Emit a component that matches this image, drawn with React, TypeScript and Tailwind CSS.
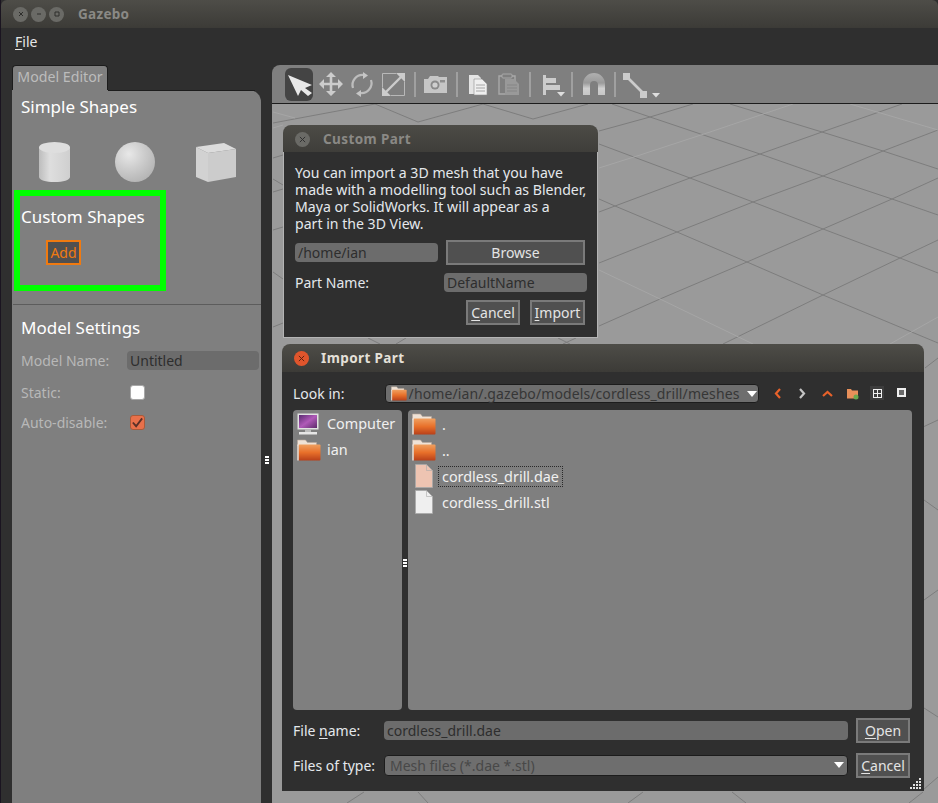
import React from "react";

const FONT = "[font-family:'Noto_Sans','Open_Sans',sans-serif]";

function Folder({ className = "" }: { className?: string }) {
  return (
    <svg viewBox="0 0 24 22" className={className}>
      <defs>
        <linearGradient id="fg" x1="0" y1="0" x2="0" y2="1">
          <stop offset="0" stopColor="#f0a060" />
          <stop offset="0.5" stopColor="#e8702a" />
          <stop offset="1" stopColor="#b8401a" />
        </linearGradient>
      </defs>
      <path d="M0.5 1h8l2 2.5h9v3h-19z" fill="#efe2d6" stroke="#b9a89a" strokeWidth="0.6" />
      <rect x="1.5" y="5.5" width="22" height="16" rx="1" fill="url(#fg)" />
      <path d="M1 5.5v16" stroke="#f4e6da" strokeWidth="1.4" />
    </svg>
  );
}

function FileIcon({ tint }: { tint: string }) {
  return (
    <svg viewBox="0 0 18 24" className="w-[18px] h-[24px] shrink-0">
      <path d="M0.5 0.5h11l6 6v17h-17z" fill={tint} stroke="#a9a9a9" strokeWidth="0.8" />
      <path d="M11.5 0.5v6h6" fill="none" stroke="#a9a9a9" strokeWidth="0.6" />
    </svg>
  );
}

function Monitor() {
  return (
    <svg viewBox="0 0 22 22" className="w-[22px] h-[22px] shrink-0">
      <defs>
        <linearGradient id="pg" x1="0" y1="0" x2="1" y2="1">
          <stop offset="0" stopColor="#5a2a70" />
          <stop offset="0.5" stopColor="#b05ab8" />
          <stop offset="1" stopColor="#5d2a6a" />
        </linearGradient>
      </defs>
      <rect x="0.5" y="0.5" width="21" height="16" fill="#e2e2e2" />
      <rect x="2" y="2" width="18" height="13" fill="url(#pg)" />
      <rect x="8" y="16.5" width="6" height="2.5" fill="#bdbdbd" />
      <rect x="2" y="19" width="18" height="2.5" fill="#e6e6e6" />
    </svg>
  );
}

function Cylinder() {
  return (
    <svg viewBox="0 0 31 40" className="w-[31px] h-[40px]">
      <defs>
        <linearGradient id="cyl" x1="0" x2="1" y1="0" y2="0">
          <stop offset="0" stopColor="#bdbdbd" />
          <stop offset="0.35" stopColor="#dedede" />
          <stop offset="1" stopColor="#cfcfcf" />
        </linearGradient>
      </defs>
      <path d="M0 5v30c0 3 7 5 15.5 5S31 38 31 35V5z" fill="url(#cyl)" />
      <ellipse cx="15.5" cy="5.5" rx="15.5" ry="5.5" fill="#dedede" />
    </svg>
  );
}

function Sphere() {
  return (
    <svg viewBox="0 0 40 40" className="w-[40px] h-[40px]">
      <defs>
        <radialGradient id="sph" cx="0.35" cy="0.3" r="0.75">
          <stop offset="0" stopColor="#e8e8e8" />
          <stop offset="0.5" stopColor="#cdcdcd" />
          <stop offset="1" stopColor="#b4b4b4" />
        </radialGradient>
      </defs>
      <circle cx="20" cy="20" r="20" fill="url(#sph)" />
    </svg>
  );
}

function Cube() {
  return (
    <svg viewBox="0 0 40 40" className="w-[40px] h-[40px]">
      <path d="M0 5L28 1L40 7L12 11z" fill="#dcdcdc" />
      <path d="M0 5L12 11V40L0 35z" fill="#d2d2d2" />
      <path d="M12 11L40 7V35L12 40z" fill="#cccccc" />
    </svg>
  );
}

function Sep({ cls }: { cls: string }) {
  return <div className={`w-[2px] h-[25px] mt-[4px] bg-[#a0a0a0] shrink-0 ${cls}`} />;
}

function Tool({ box, children }: { box: string; children: React.ReactNode }) {
  const w = box.split(" ")[2];
  return (
    <svg viewBox={box} width={Number(w)} height={33} className="shrink-0 block">
      {children}
    </svg>
  );
}

function Toolbar() {
  const c = "#cccccc";
  return (
    <div className="h-[39px] shrink-0 bg-[#7f7f7f] rounded-tl-lg border-b border-[#1c1c1c] flex items-start pl-[13px] pt-[3px]">
      <div className="w-[28px] h-[33px] bg-[#444444] rounded-md shrink-0">
        <Tool box="285 68 28 33">
          <polygon points="288,75 312,85 305,88 312,93 308,96 301,90 298,96" fill="#e8e8e8" />
        </Tool>
      </div>
      <div className="w-[3px]" />
      <Tool box="316 68 31 33">
        <g stroke={c} strokeWidth="2.6" fill={c}>
          <path d="M331 76V92M323 84H339" />
          <path d="M331 72l5 5h-10zM331 96l5-5h-10zM319 84l5-5v10zM343 84l-5-5v10z" stroke="none" />
        </g>
      </Tool>
      <Tool box="347 68 31 33">
        <g fill="none" stroke="#bdbdbd" strokeWidth="2.2">
          <path d="M353 88a10 10 0 0 1 11-13" />
          <path d="M371 80a10 10 0 0 1-11 13" />
        </g>
        <path d="M363 72l5 3.5-5 3.5zM361 90l-5 3.5 5 3.5z" fill="#c6c6c6" />
      </Tool>
      <Tool box="378 68 31 33">
        <g fill="none" stroke="#b8b8b8" strokeWidth="1">
          <path d="M396 73.5H382.5V87M391 95.5H404.5V82" />
        </g>
        <path d="M386 92L401 77" stroke={c} strokeWidth="2.4" />
        <path d="M396 73h9v9zM382 87v9h9z" fill={c} />
      </Tool>
      <Sep cls="ml-[5px] mr-[4px]" />
      <Tool box="420 68 31 33">
        <path d="M424 79h4l2-3h8l1 1h8v16h-23z" fill="#c6c6c6" />
        <circle cx="435" cy="85" r="4.5" fill="#8a8a8a" />
        <circle cx="435" cy="85" r="2.6" fill="#cfcfcf" />
        <rect x="440" y="80" width="5" height="2.5" fill="#8f8f8f" />
      </Tool>
      <Sep cls="ml-[5px] mr-[4px]" />
      <Tool box="462 68 31 33">
        <path d="M469 75h9l3 3v16h-12z" fill="#e4e4e4" />
        <path d="M474 79h8l5 5v11h-13z" fill="#efefef" stroke="#8f8f8f" strokeWidth="0.6" />
        <path d="M476 85h9M476 88h9M476 91h9" stroke="#a6a6a6" strokeWidth="1" />
      </Tool>
      <Tool box="493 68 31 33">
        <path d="M499 76h16v18h-16z" fill="none" stroke="#a9a9a9" strokeWidth="1.4" />
        <rect x="502" y="74" width="10" height="4" rx="1" fill="#7f7f7f" stroke="#a9a9a9" />
        <path d="M505 79h9l5 5v11h-14z" fill="#999999" />
        <path d="M507 85h10M507 88h10M507 91h10" stroke="#858585" strokeWidth="1" />
      </Tool>
      <Sep cls="ml-[5px] mr-[4px]" />
      <Tool box="535 68 31 33">
        <path d="M543 75h3v20h-3zM546 78h10v5h-10zM546 85h14v5h-14z" fill={c} />
        <path d="M557 92h8l-4 4.5z" fill="#dedede" />
      </Tool>
      <Sep cls="ml-[5px] mr-[4px]" />
      <Tool box="576 68 31 33">
        <defs>
          <linearGradient id="mag" x1="0" y1="0" x2="0" y2="1">
            <stop offset="0" stopColor="#b0b0b0" />
            <stop offset="0.45" stopColor="#9a9a9a" />
            <stop offset="0.7" stopColor="#d0d0d0" />
            <stop offset="1" stopColor="#c6c6c6" />
          </linearGradient>
        </defs>
        <path d="M582 95V84a11 11 0 0 1 22 0v11h-7V85a4 4 0 0 0-8 0v10z" fill="url(#mag)" />
      </Tool>
      <Sep cls="ml-[6px] mr-[5px]" />
      <Tool box="621 68 44 33">
        <rect x="623" y="73" width="7" height="7" fill={c} />
        <rect x="640" y="91" width="7" height="7" fill={c} />
        <path d="M627 77L644 94" stroke={c} strokeWidth="2.6" />
        <path d="M652 93h8l-4 4.5z" fill="#dedede" />
      </Tool>
    </div>
  );
}

function Grid() {
  const dark = [
    "M612 104L650 117L760 154L823 176L892 199L938 215",
    "M730 104L822 132L883 151L938 169",
    "M599 144L690 178L753 202L823 229L900 258L938 273",
    "M599 199L615 206L677 232L747 262L823 295L938 343",
    "M599 212L615 206L690 178L760 154L822 132L902 104",
    "M599 263L677 232L753 202L823 176L883 151L938 130",
    "M599 326L660 299L747 262L823 229L892 199L938 178",
    "M723 344L823 295L900 258L938 240",
    "M599 131L650 117L693 104",
    "M273 123L375 104L418 122L483 104L533 119L588 104",
    "M273 158L283 155M273 179L283 185M273 192L283 189M273 230L283 227M273 272L283 279M273 327L283 323",
    "M368 338L380 344M396 344L406 338M563 344L576 338M558 338L570 344",
    "M347 803L364 792M418 792L428 803M628 803L643 792M732 792L746 803M909 803L923 792",
    "M924 708L938 717M923 790L938 777M925 368L938 358M923 427L938 420M924 500L938 510M924 600L938 590",
  ];
  const light = [
    "M599 168L637 156L710 132L793 104",
    "M599 270L660 299L753 344",
    "M850 104L938 130",
    "M890 344L938 317",
    "M273 128L283 125M273 112L295 118",
  ];
  return (
    <svg viewBox="272 104 666 700" className="absolute inset-0 w-[666px] h-[700px]">
      <g fill="none" stroke="#7d7d7d" strokeWidth="1">
        {dark.map((d) => (
          <path key={d} d={d} />
        ))}
      </g>
      <g fill="none" stroke="#a6a6a6" strokeWidth="1">
        {light.map((d) => (
          <path key={d} d={d} />
        ))}
      </g>
    </svg>
  );
}

function Btn({ cls, children }: { cls: string; children: React.ReactNode }) {
  return (
    <div className={`h-[25px] bg-[#505050] border-2 border-[#7a7a7a] flex items-center justify-center text-[14px] text-[#e4e4e4] shrink-0 ${cls}`}>
      {children}
    </div>
  );
}

function Ul({ children }: { children: React.ReactNode }) {
  return <span className="underline underline-offset-2">{children}</span>;
}

function Close({ active }: { active?: boolean }) {
  return (
    <div className={`w-[15px] h-[15px] rounded-full flex items-center justify-center shrink-0 ${active ? "bg-[#e0552c]" : "bg-[#6a6a66]"}`}>
      <svg viewBox="0 0 8 8" className="w-[7px] h-[7px]">
        <path d="M1 1L7 7M7 1L1 7" stroke={active ? "#5a2010" : "#2f2f2f"} strokeWidth="1.1" />
      </svg>
    </div>
  );
}

function CustomPart() {
  return (
    <div className="absolute left-[11px] top-[21px] w-[315px] h-[213px] flex flex-col">
      <div className="h-[27px] rounded-t-lg bg-gradient-to-b from-[#4c4b46] to-[#3f3e3a] flex items-center pl-[12px] pt-[2px] gap-[13px] shrink-0">
        <Close />
        <span className="text-[13.5px] font-bold text-[#8a8985] tracking-[0.4px]">Custom Part</span>
      </div>
      <div className="flex-1 bg-[#2f2f2f] border-x border-b border-[#b4b4b4] pl-[11px] pr-[10px] pt-[12px] text-[#e4e8ec]">
        <p className="text-[14.1px] leading-[17px] whitespace-nowrap">
          You can import a 3D mesh that you have
          <br />
          made with a modelling tool such as Blender,
          <br />
          Maya or SolidWorks. It will appear as a
          <br />
          part in the 3D View.
        </p>
        <div className="flex items-center mt-[8px] h-[25px]">
          <div className="w-[143px] h-[19px] rounded bg-[#6c6c6c] text-[14px] leading-[19px] pl-[3px] text-[#2e2e2e]">/home/ian</div>
          <Btn cls="w-[139px] ml-[8px]">Browse</Btn>
        </div>
        <div className="flex items-center mt-[8px] h-[19px]">
          <span className="w-[149px] text-[14px] text-[#e4e8ec]">Part Name:</span>
          <div className="w-[143px] h-[19px] rounded bg-[#6c6c6c] text-[14px] leading-[19px] pl-[3px] text-[#2e2e2e]">DefaultName</div>
        </div>
        <div className="flex justify-end gap-[10px] mt-[8px] pr-[2px]">
          <Btn cls="w-[54px]">
            <span><Ul>C</Ul>ancel</span>
          </Btn>
          <Btn cls="w-[55px]">
            <span><Ul>I</Ul>mport</span>
          </Btn>
        </div>
      </div>
    </div>
  );
}

function Caret() {
  return <span className="w-0 h-0 border-x-[5.5px] border-x-transparent border-t-[6px] border-t-white shrink-0" />;
}

function NavIcons() {
  return (
    <svg viewBox="768 384 144 19" className="w-[144px] h-[19px] ml-[9px] shrink-0">
      <path d="M780 389l-4 4.5 4 4.5" fill="none" stroke="#e8622a" strokeWidth="2.2" />
      <path d="M800 389l4 4.5-4 4.5" fill="none" stroke="#c4c4c4" strokeWidth="2.2" />
      <path d="M823 396l4.5-4 4.5 4" fill="none" stroke="#e8622a" strokeWidth="2.2" />
      <path d="M847 389h4l1 1.5h6v8h-11z" fill="#e8905a" />
      <circle cx="856" cy="397" r="2.5" fill="#6aa84f" />
      <rect x="870" y="386" width="14" height="14" fill="#3d3d3d" />
      <rect x="873" y="389" width="9" height="9" fill="#f0f0f0" />
      <path d="M874 390h3v3h-3zM878 390h3v3h-3zM874 394h3v3h-3zM878 394h3v3h-3z" fill="#3d3d3d" />
      <rect x="897" y="388" width="9" height="9" fill="#f0f0f0" />
      <rect x="899" y="390" width="5" height="5" fill="#6a6a6a" />
    </svg>
  );
}

function Grip() {
  const pts = [[8, 0], [8, 3], [5, 3], [8, 6], [5, 6], [2, 6], [8, 9], [5, 9], [2, 9], [-1, 9]];
  return (
    <svg viewBox="-1 0 11 11" className="absolute right-[3px] bottom-[2px] w-[11px] h-[11px]">
      {pts.map(([x, y]) => (
        <rect key={`${x}-${y}`} x={x} y={y} width="2" height="2" fill="#e0e0e0" />
      ))}
    </svg>
  );
}

function Row({ icon, label, focus }: { icon: React.ReactNode; label: string; focus?: boolean }) {
  return (
    <div className="h-[26px] flex items-center">
      <div className="w-[30px] flex justify-center shrink-0">{icon}</div>
      <span className={`text-[14.4px] leading-[19px] text-[#f0f0f0] px-[3px] ${focus ? "outline-dotted outline-1 outline-[#2a2a2a]" : ""}`}>{label}</span>
    </div>
  );
}

function ImportPart() {
  return (
    <div className="absolute left-[10px] top-[240px] w-[642px] h-[447px] flex flex-col">
      <div className="h-[28px] rounded-t-lg bg-gradient-to-b from-[#4e4d48] to-[#3c3b37] flex items-center pl-[12px] gap-[12px] shrink-0">
        <Close active />
        <span className="text-[13.5px] font-bold text-[#e4e0d8] tracking-[0.4px]">Import Part</span>
      </div>
      <div className="relative flex-1 min-h-0 bg-[#2f2f2f] pl-[11px] pr-[12px] pt-[12px] flex flex-col">
        <div className="flex items-center h-[19px] shrink-0">
          <span className="w-[92px] text-[14px] text-[#e4e8ec]">Look in:</span>
          <div className="w-[376px] h-[19px] rounded bg-[#6e6e6e] border border-[#1c1c1c] flex items-center pl-[5px] pr-[1px] gap-[2px]">
            <Folder className="w-[16px] h-[15px] shrink-0" />
            <span className="flex-1 text-[14px] tracking-[0.1px] text-[#363636] whitespace-nowrap overflow-hidden">/home/ian/.gazebo/models/cordless_drill/meshes</span>
            <Caret />
          </div>
          <NavIcons />
        </div>
        <div className="flex mt-[7px] h-[300px] shrink-0">
          <div className="w-[109px] bg-[#7f7f7f] rounded pt-[1px] pl-[4px]">
            <div className="h-[26px] flex items-center gap-[8px]">
              <Monitor />
              <span className="text-[14.4px] text-[#f0f0f0] whitespace-nowrap">Computer</span>
            </div>
            <div className="h-[26px] flex items-center gap-[6px]">
              <Folder className="w-[24px] h-[22px] shrink-0" />
              <span className="text-[14.4px] text-[#f0f0f0]">ian</span>
            </div>
          </div>
          <div className="w-[6px] flex flex-col items-center gap-[1px] pt-[149px]">
            <div className="w-[4px] h-[2px] bg-white" />
            <div className="w-[4px] h-[2px] bg-white" />
            <div className="w-[4px] h-[2px] bg-white" />
          </div>
          <div className="flex-1 bg-[#7f7f7f] rounded pt-[1px] pl-[1px]">
            <Row icon={<Folder className="w-[24px] h-[22px]" />} label="." />
            <Row icon={<Folder className="w-[24px] h-[22px]" />} label=".." />
            <Row icon={<FileIcon tint="#eec4b2" />} label="cordless_drill.dae" focus />
            <Row icon={<FileIcon tint="#efefef" />} label="cordless_drill.stl" />
          </div>
        </div>
        <div className="flex items-center mt-[8px] h-[25px] shrink-0">
          <span className="w-[91px] text-[14px] text-[#e4e8ec]">File <Ul>n</Ul>ame:</span>
          <div className="w-[464px] h-[19px] rounded bg-[#6c6c6c] text-[14px] leading-[19px] pl-[3px] text-[#2e2e2e]">cordless_drill.dae</div>
          <Btn cls="w-[54px] ml-[8px]">
            <span><Ul>O</Ul>pen</span>
          </Btn>
        </div>
        <div className="flex items-center mt-[9px] h-[26px] shrink-0">
          <span className="w-[91px] text-[14px] text-[#e4e8ec] whitespace-nowrap">Files of type:</span>
          <div className="w-[464px] h-[21px] rounded bg-[#6e6e6e] border border-[#1c1c1c] flex items-center pl-[5px] pr-[3px] justify-between">
            <span className="text-[14px] text-[#484848]">Mesh files (*.dae *.stl)</span>
            <Caret />
          </div>
          <Btn cls="w-[54px] ml-[8px]">
            <span><Ul>C</Ul>ancel</span>
          </Btn>
        </div>
        <Grip />
      </div>
    </div>
  );
}

function SettingRow({ label, children }: { label: string; children: React.ReactNode }) {
  return (
    <div className="flex items-center h-[19px]">
      <span className="w-[106px] text-[14px] text-[#b8b8b8] shrink-0">{label}</span>
      {children}
    </div>
  );
}

function LeftPanel() {
  return (
    <div className="w-[249px] shrink-0 flex flex-col pt-[5px]">
      <div className="w-[96px] h-[25px] pb-[2px] bg-[#7f7f7f] rounded-t border-x border-t border-[#1c1c1c] flex items-center justify-center text-[14.2px] text-[#bcbcbc] whitespace-nowrap">
        Model Editor
      </div>
      <div className="flex-1 bg-[#7f7f7f] rounded-tr-xl relative">
        <div className="absolute left-[96px] right-[6px] top-0 h-[1px] bg-[#1c1c1c]" />
        <div className="h-[34px] flex items-center pl-[9px] text-[17px] text-white">Simple Shapes</div>
        <div className="flex mt-[18px] pl-[27px]">
          <Cylinder />
          <div className="ml-[45px]">
            <Sphere />
          </div>
          <div className="ml-[41px]">
            <Cube />
          </div>
        </div>
        <div className="ml-[2px] mt-[8px] w-[152px] h-[101px] border-[6px] border-[#00ff00] pl-[1px] pt-[9px]">
          <div className="text-[17px] leading-[24px] text-white whitespace-nowrap">Custom Shapes</div>
          <div className="mt-[11px] ml-[25px] w-[35px] h-[25px] bg-[#505050] border-2 border-[#f07a10] flex items-center justify-center text-[14px] text-[#f07a10]">
            Add
          </div>
        </div>
        <div className="mt-[13px] h-[1px] bg-[#5c5c5c] ml-[1px]" />
        <div className="h-[46px] flex items-center pl-[9px] text-[17px] text-white">Model Settings</div>
        <div className="pl-[9px] flex flex-col">
          <SettingRow label="Model Name:">
            <div className="w-[132px] h-[19px] rounded bg-[#6c6c6c] text-[14px] leading-[19px] pl-[3px] text-[#2e2e2e]">Untitled</div>
          </SettingRow>
          <div className="mt-[13px]">
            <SettingRow label="Static:">
              <div className="ml-[3px] w-[15px] h-[15px] rounded-[3px] bg-white border border-[#a8a8a8]" />
            </SettingRow>
          </div>
          <div className="mt-[11px]">
            <SettingRow label="Auto-disable:">
              <div className="ml-[3px] w-[15px] h-[15px] rounded-[3px] bg-[#e8704a] border border-[#a85a3a] flex items-center justify-center">
                <svg viewBox="0 0 14 14" className="w-[13px] h-[13px]">
                  <path d="M2 7l3.5 4L12 2.5" fill="none" stroke="#5a3028" strokeWidth="2" />
                </svg>
              </div>
            </SettingRow>
          </div>
        </div>
      </div>
    </div>
  );
}

export default function App() {
  return (
    <div className={`w-[938px] h-[803px] overflow-hidden flex flex-col bg-[#2f2f2f] border-l border-[#1a1420] ${FONT}`}>
      <div className="h-[28px] shrink-0 rounded-t-md bg-gradient-to-b from-[#4e4d48] to-[#3c3b37] flex items-center pl-[12px]">
        <div className="flex gap-[3px]">
          {["M2 2L6 6M6 2L2 6", "M2 4H6", "M2 2H6V6H2Z"].map((d) => (
            <div key={d} className="w-[15px] h-[15px] rounded-full bg-[#6a6a66] flex items-center justify-center">
              <svg viewBox="0 0 8 8" className="w-[8px] h-[8px]">
                <path d={d} fill="none" stroke="#2e2e2c" strokeWidth="1" />
              </svg>
            </div>
          ))}
        </div>
        <span className="ml-[14px] text-[13.5px] font-bold text-[#8a8985] tracking-[0.3px]">Gazebo</span>
      </div>
      <div className="h-[32px] shrink-0 flex items-center pl-[14px] pb-[6px] text-[14px] text-[#e6e6e6]">
        <span><Ul>F</Ul>ile</span>
      </div>
      <div className="flex-1 min-h-0 flex pl-[11px]">
        <LeftPanel />
        <div className="w-[11px] shrink-0 flex flex-col items-center gap-[1px] pt-[396px]">
          <div className="w-[4px] h-[2px] bg-white" />
          <div className="w-[4px] h-[2px] bg-white" />
          <div className="w-[4px] h-[2px] bg-white" />
        </div>
        <div className="flex-1 min-w-0 flex flex-col pt-[5px]">
          <Toolbar />
          <div className="relative flex-1 bg-[#9a9a9a] overflow-hidden">
            <Grid />
            <CustomPart />
            <ImportPart />
          </div>
        </div>
      </div>
    </div>
  );
}
